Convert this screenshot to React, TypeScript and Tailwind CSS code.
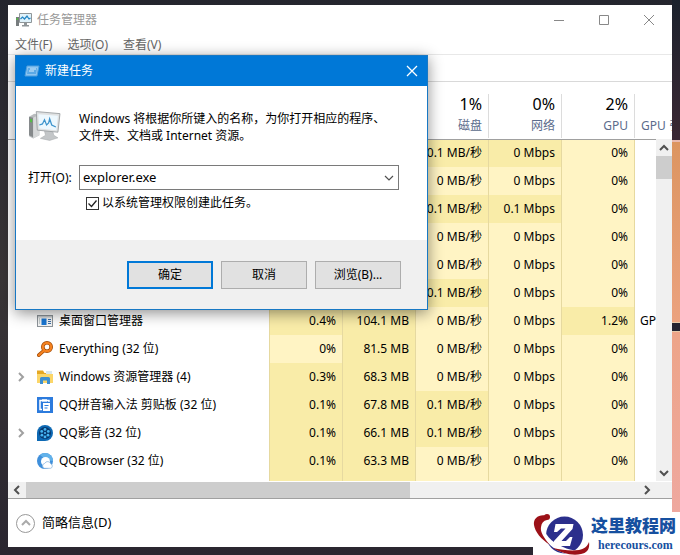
import React from "react";
import clsx from "clsx";

const processes = [
  { disk: "0.1 MB/秒", net: "0 Mbps", gpu: "0%", hot: ["cpu", "mem", "disk", "net"] },
  { disk: "0 MB/秒", net: "0 Mbps", gpu: "0%", hot: ["cpu", "mem"] },
  { disk: "0.1 MB/秒", net: "0.1 Mbps", gpu: "0%", hot: ["cpu", "mem", "disk", "net"] },
  { disk: "0 MB/秒", net: "0 Mbps", gpu: "0%", hot: ["cpu", "mem"] },
  { disk: "0 MB/秒", net: "0 Mbps", gpu: "0%", hot: ["cpu", "mem"] },
  { disk: "0.1 MB/秒", net: "0 Mbps", gpu: "0%", hot: ["cpu", "mem", "disk"] },
  { name: "桌面窗口管理器", icon: "dwm", cpu: "0.4%", mem: "104.1 MB", disk: "0 MB/秒", net: "0 Mbps", gpu: "1.2%", engine: "GPU", hot: ["cpu", "mem", "gpu"] },
  { name: "Everything (32 位)", icon: "everything", cpu: "0%", mem: "81.5 MB", disk: "0 MB/秒", net: "0 Mbps", gpu: "0%", hot: ["mem"] },
  { name: "Windows 资源管理器 (4)", icon: "explorer", expand: true, cpu: "0.3%", mem: "68.3 MB", disk: "0 MB/秒", net: "0 Mbps", gpu: "0%", hot: ["cpu", "mem"] },
  { name: "QQ拼音输入法 剪贴板 (32 位)", icon: "clipboard", cpu: "0.1%", mem: "67.8 MB", disk: "0.1 MB/秒", net: "0 Mbps", gpu: "0%", hot: ["cpu", "mem", "disk"] },
  { name: "QQ影音 (32 位)", icon: "player", expand: true, cpu: "0.1%", mem: "66.1 MB", disk: "0.1 MB/秒", net: "0 Mbps", gpu: "0%", hot: ["cpu", "mem", "disk"] },
  { name: "QQBrowser (32 位)", icon: "browser", cpu: "0.1%", mem: "63.3 MB", disk: "0 MB/秒", net: "0 Mbps", gpu: "0%", hot: ["cpu", "mem"] },
];

const headers = [
  { key: "cpu", value: "", label: "" },
  { key: "mem", value: "", label: "" },
  { key: "disk", value: "1%", label: "磁盘" },
  { key: "net", value: "0%", label: "网络" },
  { key: "gpu", value: "2%", label: "GPU" },
];

const Chevron = ({ d, className }: { d: string; className?: string }) => (
  <svg viewBox="0 0 10 10" className={clsx("h-2.5 w-2.5", className)} fill="none" stroke="currentColor" strokeWidth="2">
    <path d={d} />
  </svg>
);

const UP = "M1 7l4-4 4 4";
const DOWN = "M1 3l4 4 4-4";
const LEFT = "M7 1L3 5l4 4";
const RIGHT = "M3 1l4 4-4 4";

const ProcessIcon = ({ name }: { name: string }) => (
  <svg viewBox="0 0 16 16" className="h-4 w-4 shrink-0">
    {name === "dwm" && (
      <>
        <rect x=".5" y="2.5" width="15" height="11" fill="#f4f4f4" stroke="#8d9499" />
        <path d="M1 3h14v1.500H1z" fill="#c5cacd" />
        <path d="M4.500 5.500h5v6.500h-5z" fill="#1976d2" />
        <path d="M2 6h1M2 8h1M2 10h1" stroke="#9aa" />
        <path d="M11 6.500h3M11 8.500h3M11 10.500h3" stroke="#3c6fa5" />
      </>
    )}
    {name === "everything" && (
      <>
        <path d="M7 9.500L1.800 14.200" stroke="#a24a05" strokeWidth="3.600" strokeLinecap="round" />
        <circle cx="10" cy="6" r="4.200" fill="none" stroke="#a24a05" strokeWidth="3.600" />
        <path d="M7 9.500L1.800 14.200" stroke="#f58220" strokeWidth="2.200" strokeLinecap="round" />
        <circle cx="10" cy="6" r="4.200" fill="none" stroke="#f58220" strokeWidth="2.200" />
      </>
    )}
    {name === "explorer" && (
      <>
        <path d="M0 1.500h6L7.500 4H15v10H0z" fill="#e5a823" />
        <path d="M9 2h6v3H9z" fill="#d9e8ee" />
        <path d="M0 5h16v9H0z" fill="#fbd669" />
        <path d="M3 15V9.500Q3 8 4.500 8h7Q13 8 13 9.500V15h-3v-3.500H6V15z" fill="#3d8fd1" />
      </>
    )}
    {name === "clipboard" && (
      <>
        <path d="M0 0h16v16H0z" fill="#2c7bdd" />
        <path d="M5 12.500H3v-9h2M10 3.500h2V5" fill="none" stroke="#fff" strokeWidth="1.500" />
        <path d="M5 2.200h5v2.500H5z" fill="#fff" />
        <path d="M6 6h7v8H6z" fill="#fff" />
        <path d="M7.500 8.500h4M7.500 11h3" stroke="#2c7bdd" strokeWidth="1.200" />
      </>
    )}
    {name === "player" && (
      <>
        <path d="M0 16V8a8 8 0 1 1 8 8z" fill="#0d69b4" />
        <circle cx="8" cy="8" r="6" fill="#07396f" />
        <circle cx="8" cy="8" r="1.100" fill="#45b5f2" />
        <circle cx="8" cy="4.400" r="1.400" fill="#45b5f2" />
        <circle cx="11.300" cy="6.400" r="1.400" fill="#45b5f2" />
        <circle cx="11" cy="10.200" r="1.400" fill="#45b5f2" />
        <circle cx="8" cy="11.900" r="1.400" fill="#45b5f2" />
        <circle cx="4.900" cy="10.200" r="1.400" fill="#45b5f2" />
        <circle cx="4.700" cy="6.400" r="1.400" fill="#45b5f2" />
      </>
    )}
    {name === "browser" && (
      <>
        <circle cx="8" cy="8" r="8" fill="#3f8fdb" />
        <path d="M8 0a8 8 0 0 1 8 8L9 7 3 2A8 8 0 0 1 8 0z" fill="#62b2ea" />
        <circle cx="8.500" cy="8.500" r="4.500" fill="#fff" />
        <path d="M7.500 15.300a2.500 2.500 0 0 1 .2-4.900 3.300 3.300 0 0 1 6.100.5 2.300 2.300 0 0 1-.2 4.400z" fill="#fff" stroke="#8fb9e0" strokeWidth=".8" />
      </>
    )}
  </svg>
);

const AppIcon = () => (
  <svg viewBox="0 0 16 16" className="h-4 w-4">
    <path d="M0 5h3v9H0z" fill="#777c7e" />
    <path d="M.5 6h1.500v2H.5z" fill="#54bd45" />
    <path d="M3.500 1.500h12v9h-12z" fill="#dff2fb" stroke="#8f9699" />
    <path d="M4.500 7l2-2 2 2 2.500-3 2 3 1.500-1" fill="none" stroke="#2385c4" strokeWidth="1.200" />
    <path d="M8 11h3v2h2v1.500H6V13h2z" fill="#8f9699" />
  </svg>
);

const MonitorIcon = ({ className }: { className: string }) => (
  <svg viewBox="0 0 32 30" className={className}>
    <path d="M1 6l5-3 5 1v20l-6 3-4-2z" fill="#b9bcbe" />
    <path d="M1 6l4 1v19l-4-2z" fill="#85898b" />
    <path d="M2 8l2 .5v3L2 11z" fill="#54bd45" />
    <path d="M5 7l6-3v20l-6 3z" fill="#d6d8d9" />
    <path d="M16 20h8l1 4 4 2.500-8 2.500-9-2 5-3z" fill="#c3c6c8" stroke="#a5a9ab" strokeWidth=".5" />
    <path d="M8 1l23 2-2 18-20-2z" fill="#dfe1e2" stroke="#94999c" strokeWidth=".8" />
    <path d="M10 3.500l19 1.500-1.500 14L11 17.500z" fill="#edf8fe" />
    <path d="M11 14l3-1 2-4 2 5 2-2 1-4 2 6 4 2" fill="none" stroke="#3b93cc" strokeWidth="1.200" />
  </svg>
);

const TaskTable = () => (
  <div className="relative">
    <table className="w-full table-fixed border-collapse">
      <thead>
        <tr className="h-[57px]">
          <th className="border-b border-[#a0a0a0] p-0" />
          {headers.map((h) => (
            <th key={h.key} className="w-[73px] border-b border-[#a0a0a0] p-0 pt-3 font-normal">
              <div className="flex h-11 flex-col gap-0.5 border-l border-[#dcdcdc] pr-1.5 text-right leading-5">
                <span className="h-5 text-base leading-5">{h.value}</span>
                <span className="text-[#5b6b8c]">{h.label}</span>
              </div>
            </th>
          ))}
          <th className="w-[38px] border-b border-[#a0a0a0] p-0 pt-3 font-normal">
            <div className="flex h-11 items-end overflow-hidden border-l border-[#dcdcdc] pb-0.5 pl-1.5 leading-5 whitespace-nowrap text-[#5b6b8c]">
              GPU 引擎
            </div>
          </th>
        </tr>
      </thead>
      <tbody>
        {processes.map((p, i) => (
          <tr key={i} className="h-7">
            <td className="p-0">
              {p.name && (
                <div className="flex items-center whitespace-nowrap">
                  <span className="flex w-[29px] justify-center pr-1 text-[#a0a0a0]">
                    {p.expand && <button aria-label="展开"><Chevron d={RIGHT} /></button>}
                  </span>
                  <ProcessIcon name={p.icon} />
                  <span className="pl-1.5">{p.name}</span>
                </div>
              )}
            </td>
            {headers.map((h) => (
              <td
                key={h.key}
                className={clsx(
                  "p-0 pr-1.5 text-right whitespace-nowrap shadow-[inset_1px_0_0_#e6d9a0]",
                  p.hot.includes(h.key) ? "bg-[#f9eca8]" : "bg-[#fff4c4]"
                )}
              >
                {p[h.key]}
              </td>
            ))}
            <td className="overflow-hidden p-0 pl-1.5 whitespace-nowrap shadow-[inset_1px_0_0_#e6d9a0]">{p.engine}</td>
          </tr>
        ))}
        <tr className="h-1.5">
          <td className="p-0" />
          {headers.map((h) => (
            <td
              key={h.key}
              className={clsx(
                "p-0 shadow-[inset_1px_0_0_#e6d9a0]",
                h.key === "cpu" || h.key === "mem" ? "bg-[#f9eca8]" : "bg-[#fff4c4]"
              )}
            />
          ))}
          <td className="p-0 shadow-[inset_1px_0_0_#e6d9a0]" />
        </tr>
      </tbody>
    </table>

    {/* vertical scrollbar sits on top of the last column */}
    <div className="absolute top-[57px] right-0 bottom-0 flex w-4 flex-col items-center bg-[#f0f0f0] text-[#505050]">
      <button aria-label="向上" className="flex h-[17px] items-center"><Chevron d={UP} /></button>
      <div className="h-[23px] w-full bg-[#cdcdcd]" />
      <button aria-label="向下" className="mt-auto flex h-4 items-center"><Chevron d={DOWN} /></button>
    </div>
  </div>
);

const NewTaskDialog = () => (
  <div
    role="dialog"
    aria-label="新建任务"
    className="absolute top-[55px] left-[15px] w-[413px] border border-[#1878c4] bg-white shadow-[0_3px_14px_rgba(0,0,0,0.45)]"
  >
    <div className="flex h-[30px] items-center bg-[#0078d7] pl-2 text-white">
      <svg viewBox="0 0 16 12" className="h-3 w-4">
        <path d="M3 1h12l-2 10H1z" fill="#8cc5f1" stroke="#4f9fdd" />
        <path d="M4 3h9l-1 6H3z" fill="#5aa9e6" />
        <path d="M5 6h5M6 4h6" stroke="#d8edfb" />
      </svg>
      <span className="pl-[5px]">新建任务</span>
      <button aria-label="关闭" className="mr-[7px] ml-auto p-0.5">
        <svg viewBox="0 0 12 12" className="h-3 w-3" stroke="#fff" strokeWidth="1.300">
          <path d="M1 1l10 10M11 1L1 11" />
        </svg>
      </button>
    </div>

    <div className="px-3 pt-6 pb-7">
      <div className="flex">
        <MonitorIcon className="h-8 w-[51px] pr-[18px]" />
        <p className="leading-[17px] whitespace-nowrap">
          Windows 将根据你所键入的名称，为你打开相应的程序、
          <br />
          文件夹、文档或 Internet 资源。
        </p>
      </div>
      <div className="mt-[21px] flex items-center pr-4">
        <label htmlFor="task" className="w-[51px] whitespace-nowrap">打开(O):</label>
        <div className="flex h-[25px] flex-1 items-center border border-[#7a7a7a]">
          <input id="task" defaultValue="explorer.exe" className="min-w-0 flex-1 pl-[3px] text-[13px] outline-none" />
          <button aria-label="下拉" className="pr-1 text-[#505050]">
            <svg viewBox="0 0 10 10" className="h-2.5 w-2.5" fill="none" stroke="currentColor" strokeWidth="1.200">
              <path d={DOWN} />
            </svg>
          </button>
        </div>
      </div>
      <label className="mt-1 ml-[58px] flex h-[18px] items-center gap-[3px]">
        <span className="grid">
          <input type="checkbox" defaultChecked className="col-start-1 row-start-1 h-[13px] w-[13px] appearance-none border border-[#333] bg-white" />
          <svg viewBox="0 0 13 13" className="pointer-events-none col-start-1 row-start-1 h-[13px] w-[13px]" fill="none" stroke="#222" strokeWidth="1.300">
            <path d="M2.500 6.500l3 3 5-6" />
          </svg>
        </span>
        以系统管理权限创建此任务。
      </label>
    </div>

    <div className="flex justify-end gap-2 bg-[#f0f0f0] pt-[21px] pr-[26px] pb-5">
      <button className="h-7 w-[86px] border-2 border-[#0078d7] bg-[#e1e1e1]">确定</button>
      <button className="h-7 w-[86px] border border-[#adadad] bg-[#e1e1e1]">取消</button>
      <button className="h-7 w-[86px] border border-[#adadad] bg-[#e1e1e1]">浏览(B)...</button>
    </div>
  </div>
);

const Watermark = () => (
  <div className="absolute right-0 bottom-0 flex h-[43px] w-[147px] items-center bg-white">
    <svg viewBox="0 0 58 43" className="h-[43px] w-[58px] shrink-0">
      <circle cx="31.500" cy="23" r="18.500" fill="#2b2f8c" />
      <path d="M10 13c1 9 8 17 20 22 6 3 13 4 19 3l-7 5C25 42 12 32 8 19z" fill="#fff" />
      <path d="M21 20l1.500-8h18l-1 5-11 12h4.500l4-4h2.500l-2.500 9H20l1-5 11.500-12.500H28l-4 3.500z" fill="#fff" />
      <path d="M13 3.500C6 2 0 6 1 13c1 7 7 14 16 20-6-7-10-13-9-18 .5-4 2.500-6.500 6-7z" fill="#9c1118" />
      <circle cx="14" cy="5" r="3" fill="#9c1118" />
      <path d="M20 36c8 5 19 8 28 6 6-1 9-5 8-12-2 5-5 7-10 8-8 1-17 0-26-2z" fill="#9c1118" />
    </svg>
    <div className="flex flex-col whitespace-nowrap">
      <span className="text-[17px] leading-[22px] font-black text-[#1650a0]">这里教程网</span>
      <span className="pl-[7px] font-['Liberation_Serif',serif] text-xs leading-4 font-bold text-[#1650a0]">herecours.com</span>
    </div>
  </div>
);

const App = () => {
  return (
    <div className="relative flex min-h-screen overflow-hidden bg-gradient-to-b from-[#24252e] via-[#393536] to-[#2a2630] font-['Noto_Sans','Noto_Sans_CJK_SC',sans-serif] text-xs text-black">
      <main className="mt-[5px] mb-2 ml-2 flex min-w-0 flex-1 flex-col bg-white">
        <header className="flex h-[29px] items-center pl-2 text-[#999]">
          <AppIcon />
          <h1 className="pl-[5px]">任务管理器</h1>
          <div className="ml-auto flex gap-[33px] pr-[17px]">
            <button aria-label="最小化">
              <svg viewBox="0 0 12 12" className="h-3 w-3" stroke="#888"><path d="M1 6.500h10" /></svg>
            </button>
            <button aria-label="最大化">
              <svg viewBox="0 0 12 12" className="h-3 w-3" stroke="#888" fill="none"><path d="M1.500 1.500h9v9h-9z" /></svg>
            </button>
            <button aria-label="关闭窗口">
              <svg viewBox="0 0 12 12" className="h-3 w-3" stroke="#888"><path d="M1 1l10 10M11 1L1 11" /></svg>
            </button>
          </div>
        </header>
        <nav className="flex h-[21px] items-center gap-[15px] border-b border-[#e8e8e8] pt-0.5 pl-[7px] text-[#666]">
          <button>文件(F)</button>
          <button>选项(O)</button>
          <button>查看(V)</button>
        </nav>
        <div className="h-[27px] border-b border-[#d9d9d9]" />

        <TaskTable />

        <div className="mt-px flex h-4 items-center bg-[#f0f0f0] pr-4 text-[#505050]">
          <button aria-label="向左" className="flex w-[18px] justify-center"><Chevron d={LEFT} /></button>
          <div className="flex flex-1 items-center justify-between">
            <div className="h-4 w-[61%] bg-[#cdcdcd]" />
            <button aria-label="向右" className="pr-1"><Chevron d={RIGHT} /></button>
          </div>
        </div>
        <footer className="flex h-[49px] items-center border-t border-[#a0a0a0] pl-2">
          <button className="flex items-center gap-[7px] text-[13px]">
            <span className="flex h-[19px] w-[19px] items-center justify-center rounded-full border border-[#999] text-[#aaa]">
              <Chevron d={UP} />
            </span>
            简略信息(D)
          </button>
        </footer>
      </main>

      {/* wallpaper showing past the window edge */}
      <div className="flex w-2 flex-col">
        <div className="h-[140px] bg-gradient-to-b from-[#1b222d] to-[#3a2733]" />
        <div className="h-[182px] border-t-2 border-[#e8b9b0] bg-gradient-to-b from-[#dc9560] to-[#eba27f]" />
        <div className="h-2.5 border-y border-[#e6c9a8] bg-[#232230]" />
        <div className="flex-1 bg-gradient-to-b from-[#eda488] to-[#efa9a4]" />
      </div>

      <NewTaskDialog />
      <Watermark />
    </div>
  );
};

export default App;
